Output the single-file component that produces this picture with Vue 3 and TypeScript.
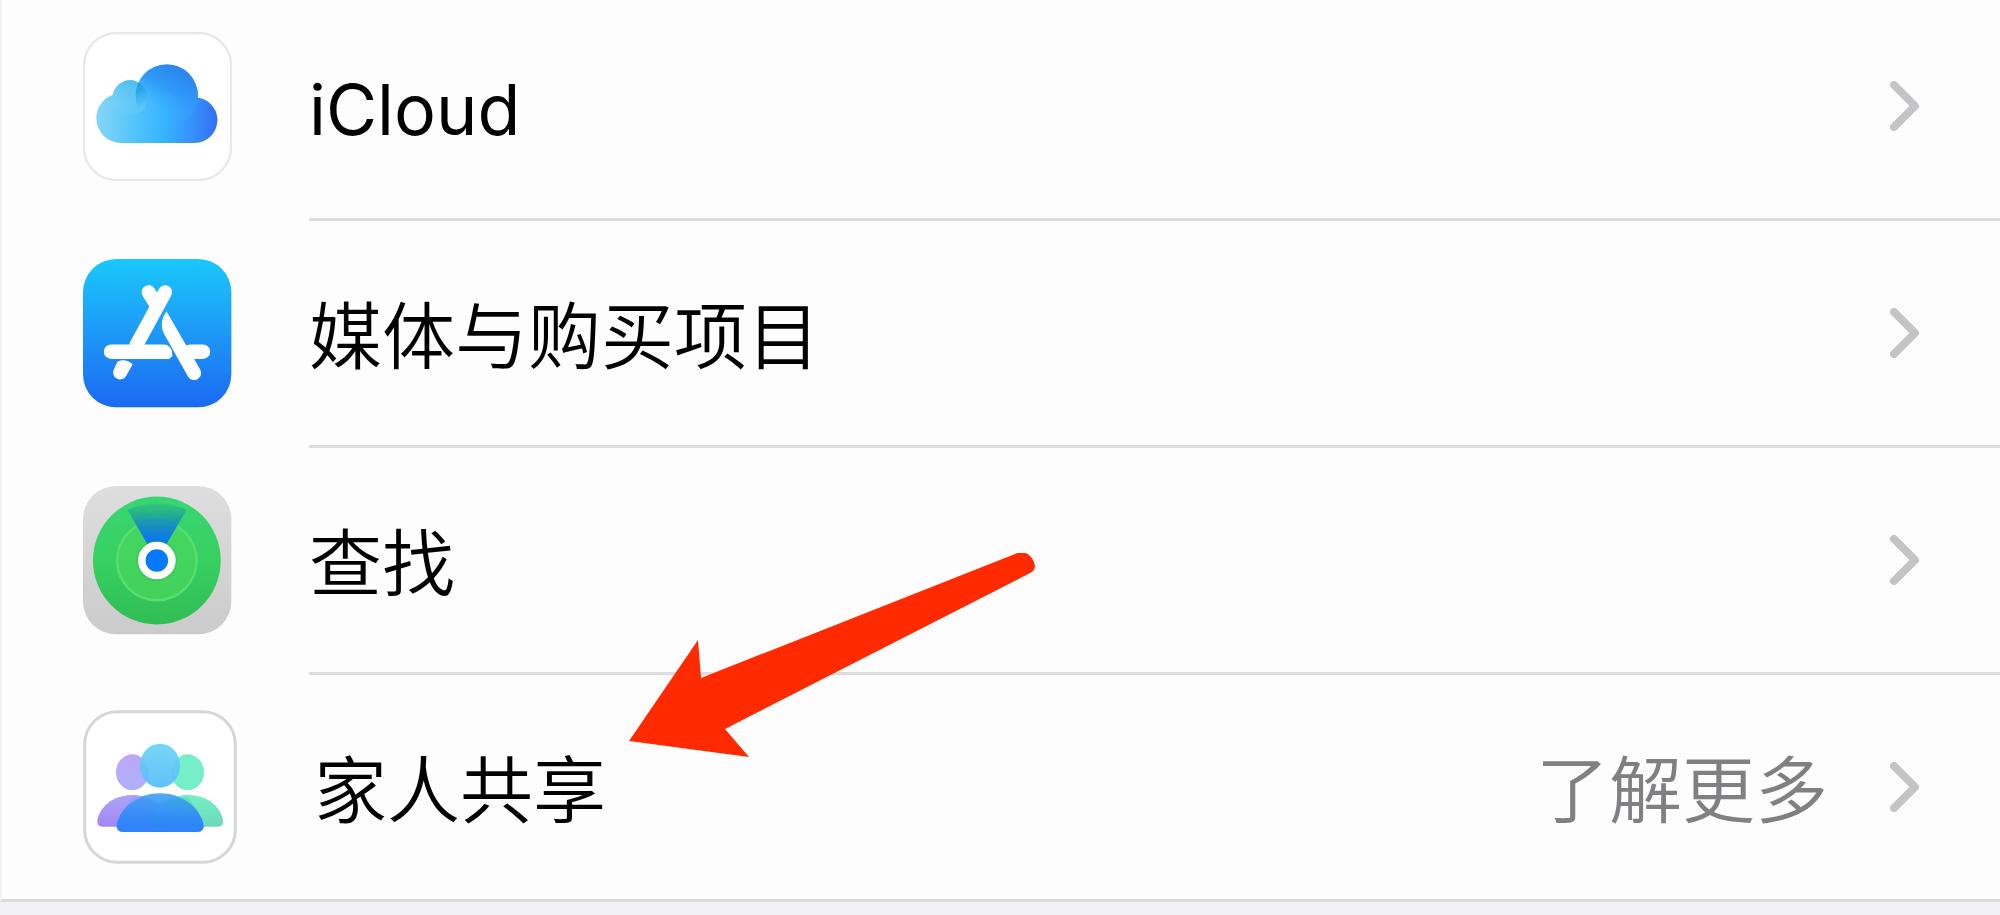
<script setup lang="ts">
interface Row {
  id: 'icloud' | 'media' | 'find' | 'family'
  label: string
  detail?: string
}

const rows: Row[] = [
  { id: 'icloud', label: 'iCloud' },
  { id: 'media', label: '媒体与购买项目' },
  { id: 'find', label: '查找' },
  { id: 'family', label: '家人共享', detail: '了解更多' },
]
</script>

<template>
  <main class="settings">
    <ul class="list">
      <li v-for="row in rows" :key="row.id" class="item">
        <button type="button" class="row">
          <svg v-if="row.id === 'icloud'" class="icon" viewBox="38 34 450 450" aria-hidden="true">
            <defs>
              <linearGradient id="cloudBase" gradientUnits="userSpaceOnUse" x1="80" y1="290" x2="445" y2="310">
                <stop offset="0" stop-color="#86d6f5" />
                <stop offset="0.3" stop-color="#55c5fb" />
                <stop offset="0.58" stop-color="#36b2ff" />
                <stop offset="0.8" stop-color="#3590fc" />
                <stop offset="1" stop-color="#356df2" />
              </linearGradient>
              <linearGradient id="cloudBig" gradientUnits="userSpaceOnUse" x1="330" y1="140" x2="250" y2="310">
                <stop offset="0" stop-color="#2b84ee" />
                <stop offset="0.4" stop-color="#2d97f5" stop-opacity="0.85" />
                <stop offset="0.8" stop-color="#38b0ff" stop-opacity="0" />
              </linearGradient>
              <linearGradient id="cloudSmall" gradientUnits="userSpaceOnUse" x1="205" y1="190" x2="160" y2="270">
                <stop offset="0" stop-color="#4abdee" />
                <stop offset="1" stop-color="#7bd3f6" stop-opacity="0.2" />
              </linearGradient>
              <linearGradient id="cloudLap" gradientUnits="userSpaceOnUse" x1="190" y1="195" x2="235" y2="245">
                <stop offset="0" stop-color="#169fdc" />
                <stop offset="1" stop-color="#2ba5f2" stop-opacity="0" />
              </linearGradient>
              <clipPath id="bigClip"><circle cx="291" cy="226" r="94" /></clipPath>
            </defs>
            <rect x="41" y="37" width="444" height="444" rx="98" fill="#fff" stroke="#e8e8e9" stroke-width="7" />
            <g fill="url(#cloudBase)">
              <circle cx="180" cy="233" r="53" />
              <circle cx="291" cy="226" r="94" />
              <circle cx="153" cy="294" r="75" />
              <circle cx="375" cy="300" r="69" />
              <path d="M153 240H375V369H153Z" />
            </g>
            <circle cx="180" cy="233" r="53" fill="url(#cloudSmall)" />
            <circle cx="291" cy="226" r="94" fill="url(#cloudBig)" />
            <circle cx="180" cy="233" r="53" fill="url(#cloudLap)" clip-path="url(#bigClip)" />
          </svg>

          <svg v-else-if="row.id === 'media'" class="icon" viewBox="38 40 450 450" aria-hidden="true">
            <defs>
              <linearGradient id="storeBg" x1="0" y1="0" x2="0" y2="1">
                <stop offset="0" stop-color="#1ac8fc" />
                <stop offset="0.5" stop-color="#1d98f7" />
                <stop offset="1" stop-color="#1b69f1" />
              </linearGradient>
            </defs>
            <rect x="38" y="40" width="448" height="448" rx="100" fill="url(#storeBg)" />
            <g fill="none" stroke="#fff" stroke-width="42" stroke-linecap="round">
              <path d="M286 140L199 300" />
              <path d="M236 140L254 170" />
              <path d="M123 320H283M362 320H400" stroke-width="44" />
            </g>
            <path d="M286 314L306 314L308 333L298 342H270Z" fill="#fff" />
            <path d="M142 350Q166 338 188 358L169 392A21 21 0 0 1 131 374Z" fill="#fff" />
            <path d="M290 198L392 374A21 21 0 0 1 355 395L281 263Q267 232 290 198Z" fill="#fff" />
          </svg>

          <svg v-else-if="row.id === 'find'" class="icon" viewBox="38 44 450 450" aria-hidden="true">
            <defs>
              <linearGradient id="findBg" x1="0" y1="0" x2="0" y2="1">
                <stop offset="0" stop-color="#dedede" />
                <stop offset="1" stop-color="#cbcbcb" />
              </linearGradient>
              <linearGradient id="findDisc" x1="0" y1="0" x2="0" y2="1">
                <stop offset="0" stop-color="#38d673" />
                <stop offset="0.5" stop-color="#37d160" />
                <stop offset="1" stop-color="#30bd56" />
              </linearGradient>
              <linearGradient id="findBeam" gradientUnits="userSpaceOnUse" x1="261" y1="92" x2="261" y2="269">
                <stop offset="0" stop-color="#32cb77" />
                <stop offset="0.2" stop-color="#25b08c" />
                <stop offset="0.42" stop-color="#168fc0" />
                <stop offset="0.6" stop-color="#0c7be4" />
                <stop offset="1" stop-color="#0877ee" />
              </linearGradient>
            </defs>
            <rect x="38" y="44" width="448" height="448" rx="100" fill="url(#findBg)" />
            <circle cx="261" cy="269" r="193" fill="url(#findDisc)" />
            <circle cx="261" cy="269" r="120" fill="#48d65c" fill-opacity="0.75" stroke="#5bdc73" stroke-width="7" />
            <path d="M261 269L172 116Q261 76 351 116Z" fill="url(#findBeam)" />
            <path d="M208 158Q261 136 315 158" fill="none" stroke="#2385f0" stroke-opacity="0.35" stroke-width="6" />
            <circle cx="261" cy="269" r="62" fill="#23a55a" fill-opacity="0.25" />
            <circle cx="261" cy="269" r="57" fill="#fff" />
            <circle cx="261" cy="269" r="34" fill="#0779ff" />
          </svg>

          <svg v-else class="icon icon-wide" viewBox="38 44 462 462" aria-hidden="true">
            <defs>
              <linearGradient id="headLeft" x1="0" y1="0" x2="0" y2="1">
                <stop offset="0" stop-color="#bda6f5" />
                <stop offset="1" stop-color="#adb0fb" />
              </linearGradient>
              <linearGradient id="headMid" x1="0" y1="0" x2="0" y2="1">
                <stop offset="0" stop-color="#6dd3f4" />
                <stop offset="1" stop-color="#55bdfb" />
              </linearGradient>
              <linearGradient id="bodyLeft" x1="0" y1="0" x2="0" y2="1">
                <stop offset="0" stop-color="#aaa5f8" />
                <stop offset="1" stop-color="#a286f4" />
              </linearGradient>
              <linearGradient id="bodyRight" x1="0" y1="0" x2="0" y2="1">
                <stop offset="0" stop-color="#76f0c2" />
                <stop offset="1" stop-color="#6bd9bc" />
              </linearGradient>
              <linearGradient id="bodyMid" x1="0" y1="0" x2="0" y2="1">
                <stop offset="0" stop-color="#45a7f4" />
                <stop offset="0.5" stop-color="#348ef8" />
                <stop offset="1" stop-color="#247bfa" />
              </linearGradient>
            </defs>
            <rect x="43" y="49" width="452" height="452" rx="98" fill="#fff" stroke="#d6d6d7" stroke-width="9" />
            <ellipse cx="186" cy="231" rx="49" ry="54" fill="url(#headLeft)" />
            <ellipse cx="352" cy="231" rx="49" ry="54" fill="#76eec7" />
            <ellipse cx="269" cy="211" rx="60" ry="66" fill="url(#headMid)" fill-opacity="0.93" />
            <path d="M98 394Q76 394 82 370C94 326 136 299 186 299C240 299 280 326 292 370Q298 394 276 394Z" fill="url(#bodyLeft)" />
            <path d="M262 394Q240 394 246 370C258 326 300 299 352 299C404 299 446 326 457 370Q463 394 441 394Z" fill="url(#bodyRight)" />
            <path d="M160 410Q136 410 139 388C151 334 205 294 269 294C333 294 387 334 400 388Q403 410 379 410Z" fill="url(#bodyMid)" fill-opacity="0.95" />
            <path d="M186 306Q236 304 264 330Q230 350 160 344Q170 330 186 306Z" fill="#5c80f0" fill-opacity="0.16" />
            <path d="M274 330Q312 302 352 306Q372 328 382 348Q320 350 274 330Z" fill="#1fa8c8" fill-opacity="0.2" />
          </svg>

          <span class="label" :class="{ latin: row.id === 'icloud' }">{{ row.label }}</span>
          <span v-if="row.detail" class="detail">{{ row.detail }}</span>
          <svg class="chevron" viewBox="0 0 30 50" aria-hidden="true">
            <path d="M4 4L25 25L4 46" />
          </svg>
        </button>
      </li>
    </ul>
    <svg class="arrow" viewBox="629 553 407 205" aria-hidden="true">
      <path d="M629 741L698 640L701 678L1015 554Q1027 549 1033 560Q1038 569 1030 573L725 729L749 757Z" />
    </svg>
  </main>
</template>

<style>
body {
  margin: 0;
  background: #f1f1f6;
}
</style>

<style scoped>
.settings {
  position: relative;
  overflow: hidden;
  min-height: 100vh;
  font-family: Inter, "Noto Sans CJK SC", sans-serif;
}

.list {
  list-style: none;
  margin: -6px 0 0;
  padding: 0;
  background: #fdfdfd;
  border-left: 2px solid #f3f3f5;
  border-bottom: 3px solid #dcdcde;
}

.item + .item::before {
  content: "";
  display: block;
  height: 3px;
  margin-left: 307px;
  background: #dddddf;
}

.row {
  display: flex;
  align-items: center;
  width: 100%;
  height: 224px;
  margin: 0;
  padding: 0 80px 0 81px;
  border: 0;
  background: none;
  color: #000;
  font-family: inherit;
  font-size: 73px;
  font-weight: 350;
  line-height: 108px;
  text-align: left;
  cursor: pointer;
}

.icon {
  flex: none;
  width: 149px;
  height: 149px;
  margin-right: 77px;
}

.icon-wide {
  width: 154px;
  height: 154px;
}

.label {
  flex: 1;
  padding-top: 8px;
}

.latin {
  font-size: 70px;
  font-weight: 400;
}

.detail {
  margin-right: 62px;
  padding-top: 8px;
  color: #808083;
}

.chevron {
  flex: none;
  width: 30px;
  height: 50px;
  fill: none;
  stroke: #c4c4c6;
  stroke-width: 8;
  stroke-linecap: round;
  stroke-linejoin: round;
}

.arrow {
  position: absolute;
  left: 629px;
  top: 553px;
  width: 407px;
  height: 205px;
  fill: #ff2a00;
  pointer-events: none;
}
</style>
